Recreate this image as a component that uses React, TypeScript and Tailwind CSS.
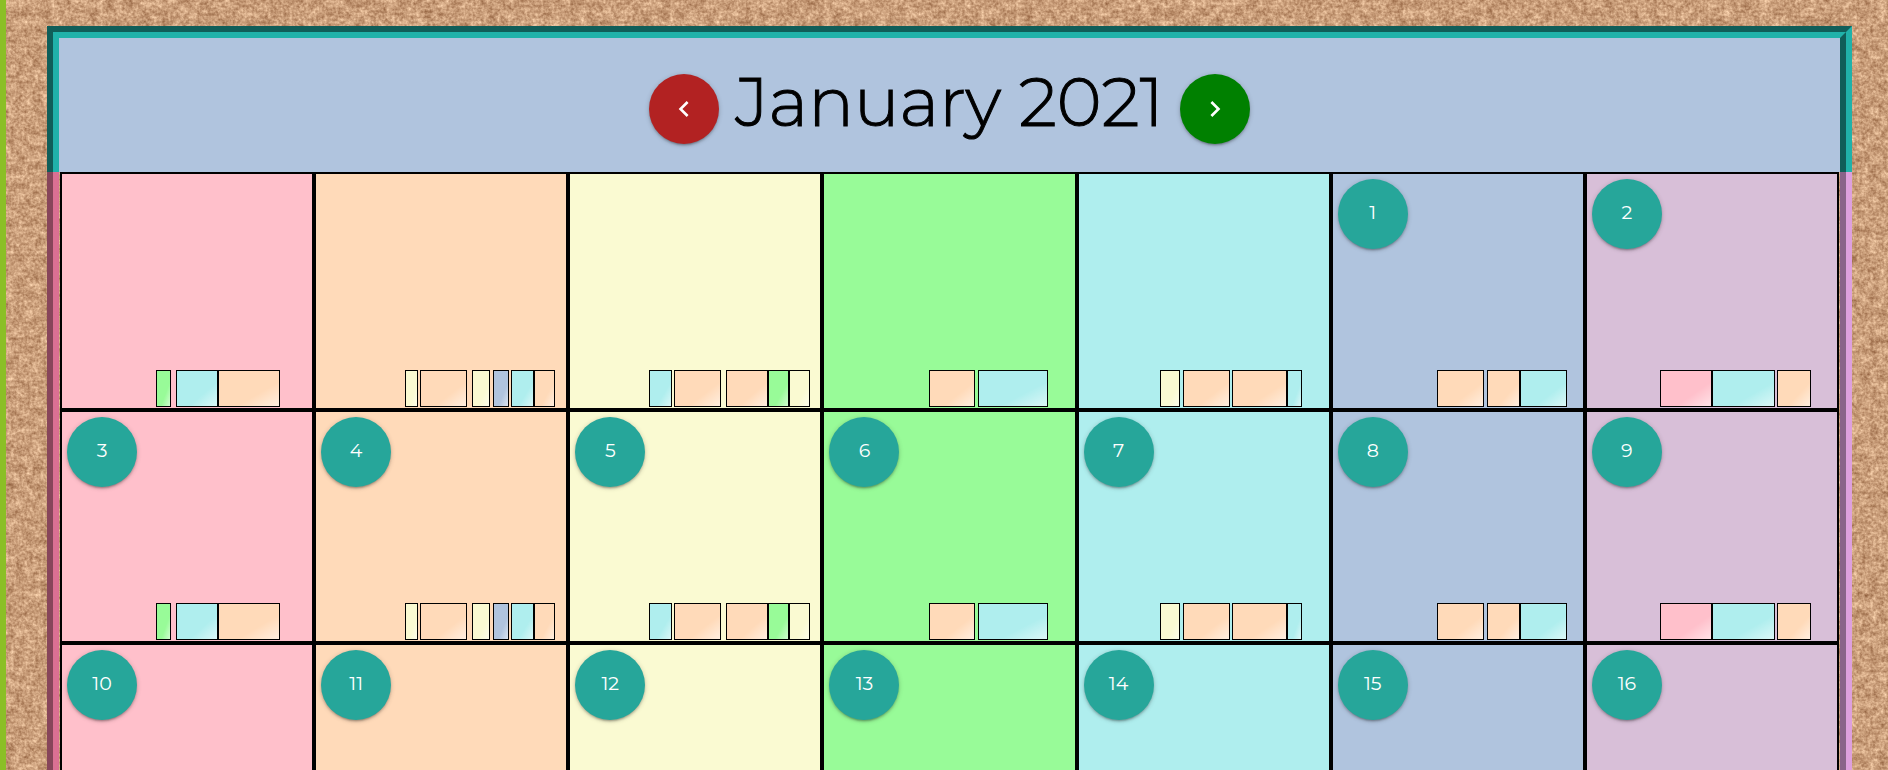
import React from "react";

type Bar = { w: number; gap?: number; tone: string };
type Column = { tone: string; start: number; bars: Bar[] };

const PEACH = "bg-[#ffdab9]";
const CREAM = "bg-[#fafad2]";
const GREEN = "bg-[#98fb98]";
const AQUA = "bg-[#afeeee]";
const STEEL = "bg-[#b0c4de]";
const PINK = "bg-[#ffc0cb]";
const THISTLE = "bg-[#d8bfd8]";

const columns: Column[] = [
  { tone: PINK, start: 94, bars: [{ w: 15, tone: GREEN }, { w: 42, gap: 5, tone: AQUA }, { w: 62, tone: PEACH }] },
  {
    tone: PEACH,
    start: 89,
    bars: [
      { w: 13, tone: CREAM },
      { w: 47, gap: 2, tone: PEACH },
      { w: 18, gap: 5, tone: CREAM },
      { w: 16, gap: 3, tone: STEEL },
      { w: 23, gap: 2, tone: AQUA },
      { w: 21, tone: PEACH },
    ],
  },
  {
    tone: CREAM,
    start: 79,
    bars: [
      { w: 23, tone: AQUA },
      { w: 47, gap: 2, tone: PEACH },
      { w: 42, gap: 5, tone: PEACH },
      { w: 21, tone: GREEN },
      { w: 21, tone: CREAM },
    ],
  },
  { tone: GREEN, start: 105, bars: [{ w: 46, tone: PEACH }, { w: 70, gap: 3, tone: AQUA }] },
  {
    tone: AQUA,
    start: 81,
    bars: [{ w: 20, tone: CREAM }, { w: 47, gap: 3, tone: PEACH }, { w: 55, gap: 2, tone: PEACH }, { w: 15, tone: AQUA }],
  },
  { tone: STEEL, start: 104, bars: [{ w: 47, tone: PEACH }, { w: 33, gap: 3, tone: PEACH }, { w: 47, tone: AQUA }] },
  { tone: THISTLE, start: 73, bars: [{ w: 52, tone: PINK }, { w: 63, tone: AQUA }, { w: 34, gap: 2, tone: PEACH }] },
];

const weeks: { height: string; days: (number | null)[] }[] = [
  { height: "h-[238px]", days: [null, null, null, null, null, 1, 2] },
  { height: "h-[233px]", days: [3, 4, 5, 6, 7, 8, 9] },
  { height: "h-[236px]", days: [10, 11, 12, 13, 14, 15, 16] },
];

const round =
  "flex h-[70px] w-[70px] shrink-0 items-center justify-center rounded-full text-white shadow-[0_2px_2px_0_rgba(0,0,0,0.14),0_3px_1px_-2px_rgba(0,0,0,0.12),0_1px_5px_0_rgba(0,0,0,0.2)]";

function Cork() {
  return (
    <svg className="absolute inset-0 -z-10 h-full w-full" aria-hidden="true">
      <filter id="cork" x="0" y="0" width="100%" height="100%" colorInterpolationFilters="sRGB">
        <feTurbulence type="fractalNoise" baseFrequency="0.11" numOctaves="2" seed="5" result="grain" />
        <feTurbulence type="fractalNoise" baseFrequency="0.37" numOctaves="2" seed="23" result="speck" />
        <feColorMatrix
          in="grain"
          values="1 0 0 0 0
                  1 0 0 0 0
                  1 0 0 0 0
                  0 0 0 0 1"
          result="grainGray"
        />
        <feColorMatrix
          in="speck"
          values="1 0 0 0 0
                  1 0 0 0 0
                  1 0 0 0 0
                  0 0 0 0 1"
          result="speckGray"
        />
        <feComposite in="grainGray" in2="speckGray" operator="arithmetic" k1="0" k2="0.45" k3="0.55" k4="0" />
        <feColorMatrix
          values="0.66 0 0 0 0.46
                  0.72 0 0 0 0.26
                  0.70 0 0 0 0.13
                  0 0 0 0 1"
        />
      </filter>
      <rect width="100%" height="100%" fill="#c99d7b" filter="url(#cork)" />
    </svg>
  );
}

function Chevron({ d }: { d: string }) {
  return (
    <svg width="32" height="32" viewBox="0 0 24 24" fill="currentColor" aria-hidden="true">
      <path d={d} />
    </svg>
  );
}

function DayCell({ day, column }: { day: number | null; column: Column }) {
  return (
    <div className={`flex min-w-0 flex-col justify-between border-2 border-black ${column.tone}`}>
      <div className="pt-[5px] pl-[5px]">
        {day !== null && (
          <button type="button" className={`${round} bg-[#26a69a] pb-[2px] text-[19px]`}>
            {day}
          </button>
        )}
      </div>
      <div className="flex pb-px" style={{ paddingLeft: column.start }}>
        {column.bars.map((bar, i) => (
          <div
            key={i}
            className={`h-[37px] shrink-0 border border-black bg-linear-to-br from-white/0 from-65% to-white/55 ${bar.tone}`}
            style={{ width: bar.w, marginLeft: bar.gap ?? 0 }}
          />
        ))}
      </div>
    </div>
  );
}

export default function App() {
  return (
    <div className="relative isolate h-screen overflow-hidden border-l-6 border-[#8bbf26] pt-[26px] pr-9 pl-[41px] font-['Montserrat','Inter',sans-serif]">
      <Cork />
      <header className="flex h-[146px] items-center justify-center gap-4 border-12 border-b-0 border-[#20b2aa] bg-[#b0c4de] pt-[7px] [border-style:groove]">
        <button type="button" aria-label="Previous month" className={`${round} bg-[#b22222]`}>
          <Chevron d="M15.41 7.41 14 6l-6 6 6 6 1.41-1.41L10.83 12z" />
        </button>
        <h1 className="pb-[14px] text-[68px] leading-[76px] font-light text-black [-webkit-text-stroke:1px_black]">
          January 2021
        </h1>
        <button type="button" aria-label="Next month" className={`${round} bg-[#008000]`}>
          <Chevron d="M10 6 8.59 7.41 13.17 12l-4.58 4.59L10 18l6-6z" />
        </button>
      </header>
      <main className="border-x-12 border-l-[#db7093] border-r-[#dda0dd] px-px [border-style:groove]">
        {weeks.map((week, w) => (
          <div key={w} className={`grid grid-cols-7 ${week.height}`}>
            {week.days.map((day, i) => (
              <DayCell key={i} day={day} column={columns[i]} />
            ))}
          </div>
        ))}
      </main>
    </div>
  );
}
